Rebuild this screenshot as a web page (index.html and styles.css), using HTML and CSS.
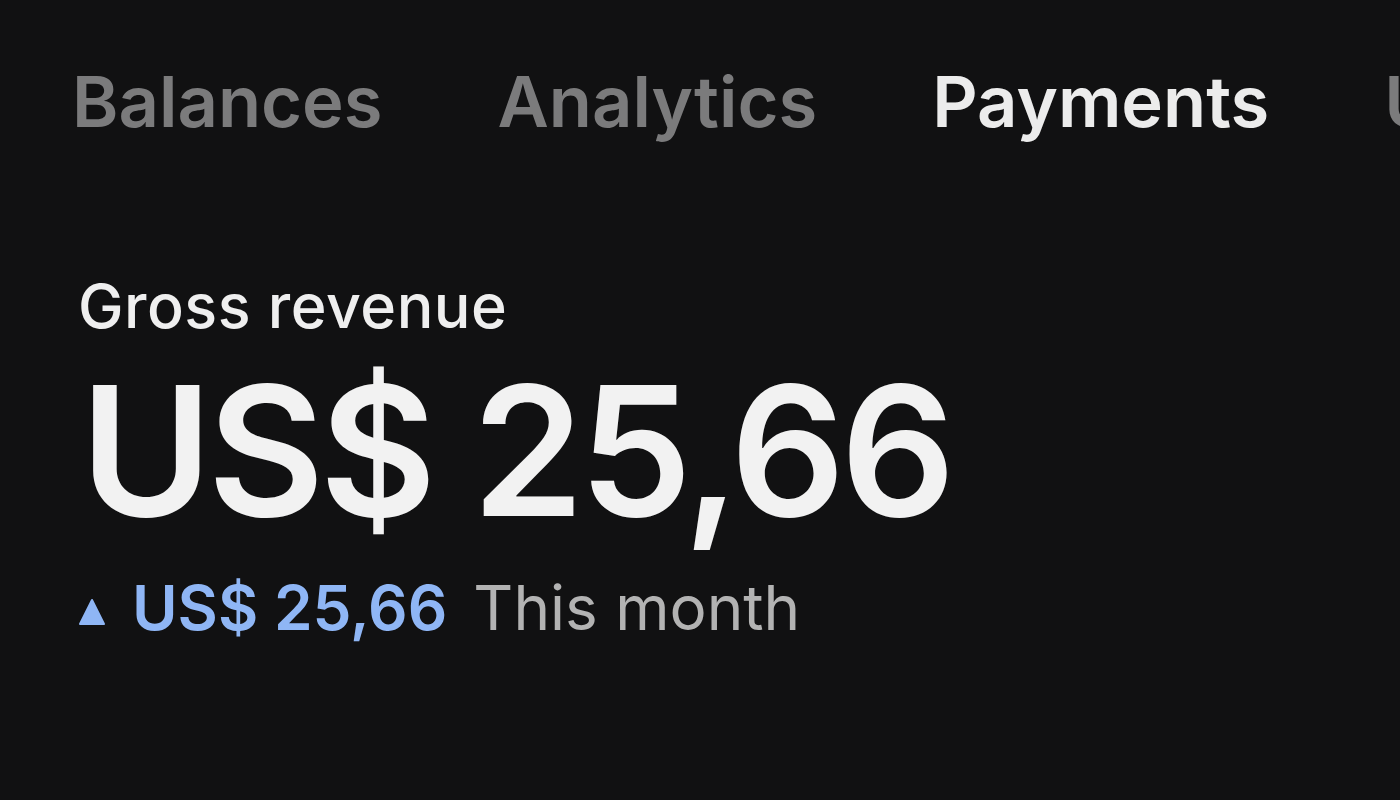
FILE: index.html
```html
<!DOCTYPE html>
<html lang="en">
<head>
<meta charset="utf-8">
<link rel="stylesheet" href="styles.css">
</head>
<body>
<div class="screen">
  <nav class="tabs">
    <span class="tab">Balances</span>
    <span class="tab">Analytics</span>
    <span class="tab active">Payments</span>
    <span class="tab">Updates</span>
  </nav>
  <section class="metric">
    <div class="label">Gross revenue</div>
    <div class="value">US$ 25,66</div>
    <div class="change">
      <svg class="tri" viewBox="0 0 28 28" width="28" height="28"><path d="M14 2 L26 26 L2 26 Z" fill="#8fb6f5" stroke="#8fb6f5" stroke-width="2" stroke-linejoin="round"/></svg>
      <span class="delta">US$ 25,66</span>
      <span class="period">This month</span>
    </div>
  </section>
</div>
</body>
</html>
```
FILE: styles.css
```css
html, body {
  margin: 0;
  padding: 0;
  background: #111112;
}
.screen {
  width: 1400px;
  height: 800px;
  overflow: hidden;
  font-family: Inter, "Noto Sans", sans-serif;
  -webkit-font-smoothing: antialiased;
}
.tabs {
  display: flex;
  gap: 115px;
  padding: 60px 0 0 72px;
  white-space: nowrap;
}
.tab {
  font-size: 70.5px;
  font-weight: 600;
  color: #7b7b7c;
  line-height: 84px;
}
.tab.active {
  color: #ececec;
}
.metric {
  padding: 130px 0 0 78px;
}
.label {
  font-size: 61px;
  font-weight: 500;
  color: #efefef;
  line-height: 64px;
  letter-spacing: 0.5px;
}
.value {
  margin-top: 28px;
  font-size: 180px;
  font-weight: 600;
  color: #f2f2f2;
  letter-spacing: -5px;
  line-height: 170px;
  margin-left: 2px;
}
.change {
  margin-top: 37px;
  display: flex;
  align-items: baseline;
  gap: 26px;
  font-size: 62px;
  line-height: 70px;
}
.tri {
  align-self: center;
  margin-top: 8px;
}
.delta {
  color: #8fb6f5;
  font-weight: 600;
}
.period {
  color: #b3b3b3;
  font-weight: 400;
}
```
